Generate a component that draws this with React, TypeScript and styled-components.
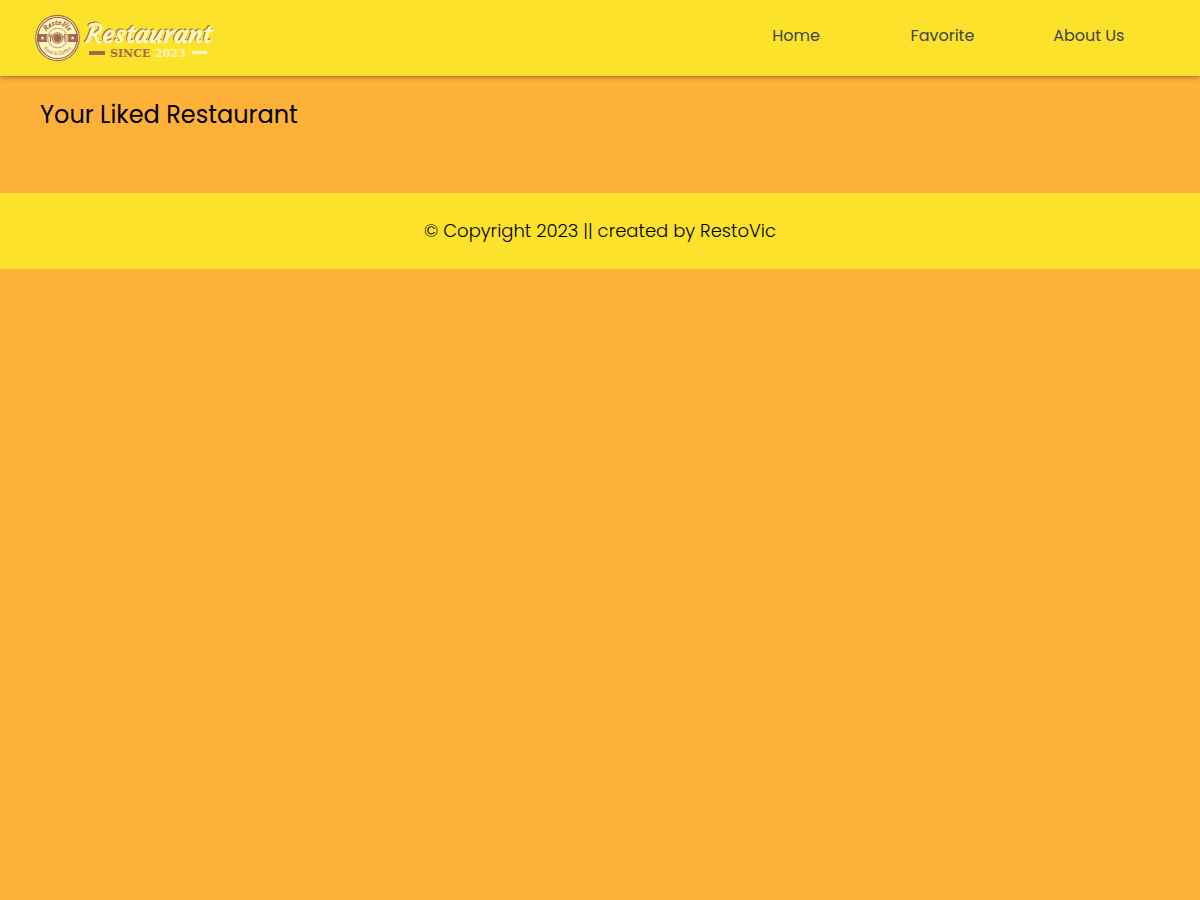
import React from 'react';
import styled, { createGlobalStyle } from 'styled-components';

const GlobalStyle = createGlobalStyle`
  * { box-sizing: border-box; }
  body {
    margin: 0;
    background: #feb139;
    color: #000;
    font-family: Poppins, Inter, "Open Sans", sans-serif;
  }
`;

const Header = styled.header`
  position: relative;
  display: flex;
  justify-content: space-between;
  height: 76px;
  padding: 0 38px 0 34px;
  background: #fce22a;
  box-shadow: 0 1px 5px rgba(0, 0, 0, 0.4);
`;

const Brand = styled.a`
  display: flex;
  align-items: center;
`;

const Script = styled.text`
  fill: #fff7bd;
  stroke: #fff7bd;
  stroke-width: 0.8px;
  font-family: Courgette, Lato, cursive;
  font-size: 26px;
  filter: drop-shadow(-1px -1px 0 #a26b50);
`;

const Nav = styled.nav`
  flex: 0 1 439px;
`;

const NavList = styled.ul`
  display: grid;
  grid-template-columns: repeat(3, 1fr);
  margin: 0;
  padding: 0;
  list-style: none;
  text-align: center;
`;

const NavLink = styled.a`
  display: block;
  padding: 24px 0;
  color: #444;
  font-size: 16px;
  line-height: 24px;
  text-decoration: none;
`;

const Main = styled.main`
  padding: 21px 40px 60px;
`;

const Title = styled.h1`
  margin: 0;
  font-size: 24px;
  font-weight: 400;
  line-height: 36px;
`;

const Footer = styled.footer`
  padding: 24px;
  background: #fce22a;
  font-size: 18px;
  font-weight: 300;
  line-height: 28px;
  text-align: center;
`;

const links = ['Home', 'Favorite', 'About Us'];

function Logo() {
  const brown = '#a26b50';
  const cream = '#fff7bd';
  return (
    <svg width="182" height="56" viewBox="0 0 182 56" role="img" aria-label="RestoVic Restaurant">
      <defs>
        <path id="badgeTop" d="M11 28 A12.5 13 0 0 1 36 28" />
        <path id="badgeBottom" d="M5.5 27 A18 18 0 0 0 41.5 27" />
      </defs>
      <ellipse cx="23.5" cy="28" rx="22.3" ry="23.2" fill={brown} />
      <ellipse cx="23.5" cy="28" rx="21.2" ry="22.1" fill={cream} />
      <ellipse cx="23.5" cy="28" rx="19.8" ry="20.7" fill="none" stroke={brown} strokeWidth="1.3" />
      <path d="M3 24H44V32H3Z" fill={brown} />
      <circle cx="23.5" cy="28" r="10.8" fill={cream} />
      <circle cx="23.5" cy="28" r="9.8" fill="none" stroke={brown} strokeWidth="0.7" />
      <circle cx="23.5" cy="28" r="5.8" fill={brown} />
      <circle cx="23.5" cy="28" r="4.5" fill="none" stroke={cream} strokeWidth="0.7" />
      <path d="M15.7 24v3M17.3 24v3M15.7 27h1.6M16.5 27v5M31 32V24q-1.4 2-1.1 4h1.1" fill="none" stroke={brown} strokeWidth="1" />
      <path d="M8.500 26l.5 1.2 1.4.2-1 .9.2 1.4-1.1-.7-1.1.7.2-1.4-1-.9 1.4-.2zM38.500 26l.5 1.2 1.4.2-1 .9.2 1.4-1.1-.7-1.1.7.2-1.4-1-.9 1.4-.2z" fill={cream} />
      <g fill={brown} textAnchor="middle">
        <text fontFamily="Courgette, Lato, cursive" fontSize="7" stroke={brown} strokeWidth="0.3">
          <textPath href="#badgeTop" startOffset="50%">RestoVic</textPath>
        </text>
        <text fontFamily="Lato, sans-serif" fontSize="5">
          <textPath href="#badgeBottom" startOffset="50%">Food &amp; Coffee</textPath>
        </text>
      </g>
      <Script x="52" y="33">Restaurant</Script>
      <path d="M55 41H71V45H55Z" fill={brown} />
      <path d="M158 41H173V44H158Z" fill={cream} />
      <g fontFamily="'DejaVu Serif', serif" fontSize="11" fontWeight="700">
        <text x="76" y="47" fill={brown}>SINCE</text>
        <text x="121" y="47" fill={cream}>2023</text>
      </g>
    </svg>
  );
}

export default function App() {
  return (
    <>
      <GlobalStyle />
      <Header>
        <Brand href="#home"><Logo /></Brand>
        <Nav>
          <NavList>
            {links.map((label) => (
              <li key={label}><NavLink href="#">{label}</NavLink></li>
            ))}
          </NavList>
        </Nav>
      </Header>
      <Main>
        <Title>Your Liked Restaurant</Title>
      </Main>
      <Footer>© Copyright 2023 || created by RestoVic</Footer>
    </>
  );
}
